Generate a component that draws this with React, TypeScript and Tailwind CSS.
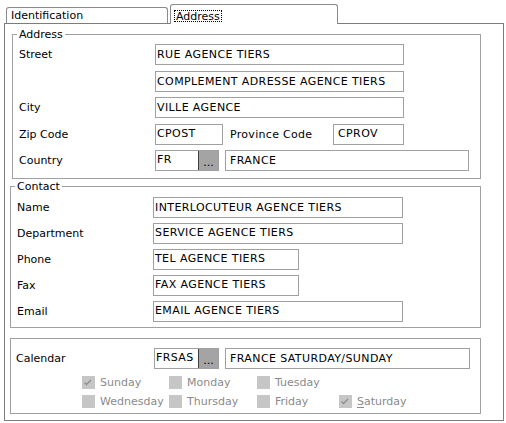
import React from "react";

function Input({ w, text, pad = 1, up = false }: { w: string; text: string; pad?: number; up?: boolean }) {
  return (
    <div
      className={`${w} h-[21px] border border-[#a0a0a0] bg-white flex items-center whitespace-nowrap overflow-hidden tracking-[0.4px] ${pad === 4 ? "pl-[4px]" : "pl-[1px]"} ${up ? "pb-[2px]" : ""}`}
    >
      {text}
    </div>
  );
}

function Combo({ w, text }: { w: string; text: string }) {
  return (
    <div className={`${w} h-[21px] border border-[#a0a0a0] bg-white flex`}>
      <div className="flex-1 pl-[1px] pb-[3px] flex items-center whitespace-nowrap overflow-hidden tracking-[0.4px]">{text}</div>
      <div className="w-[20px] h-full border-l border-[#404040] bg-[#a4a4a4] flex items-end justify-center pb-[2px] leading-[10px] text-black">
        ...
      </div>
    </div>
  );
}

function Row({ label, lw, children, className = "" }: { label: string; lw: string; children?: React.ReactNode; className?: string }) {
  return (
    <div className={`flex items-center h-[21px] ${className}`}>
      <div className={`${lw} shrink-0`}>{label}</div>
      {children}
    </div>
  );
}

function Check({ label, checked, mnemonic }: { label: string; checked?: boolean; mnemonic?: boolean }) {
  return (
    <div className="flex items-center h-[13px] gap-[5px] text-[#8a8a8a]">
      <div className="w-[13px] h-[13px] bg-[#c6c6c6] shrink-0 flex items-center justify-center">
        {checked && (
          <svg width="13" height="13" viewBox="0 0 13 13">
            <path d="M2.5 6.5 L4.5 8.5 L9 4" fill="none" stroke="#8e8e8e" strokeWidth="1.3" />
          </svg>
        )}
      </div>
      <span>
        {mnemonic ? (
          <>
            <span className="underline underline-offset-2">{label[0]}</span>
            {label.slice(1)}
          </>
        ) : (
          label
        )}
      </span>
    </div>
  );
}

export default function App() {
  return (
    <div className="w-[506px] h-[423px] bg-white text-black text-[11px] leading-[13px] [font-family:'DejaVu_Sans',Verdana,sans-serif] overflow-hidden">
      {/* Tabs */}
      <div className="h-[23px] flex items-end pl-[6px]">
        <div className="w-[162px] h-[16px] border-l border-t border-r border-[#8a8a8a] rounded-t-[3px] bg-white pl-[4px] pt-[1px]">
          Identification
        </div>
        <div className="ml-[2px] w-[168px] h-[20px] -mb-px relative z-10 border-l border-t border-r border-[#8a8a8a] rounded-t-[3px] bg-white pl-[3px] pt-[5px]">
          <span className="inline-block h-[12px] leading-[11px] px-[1px] border border-dotted border-black">Address</span>
        </div>
      </div>

      {/* Panel */}
      <div className="ml-[4px] w-[500px] h-[398px] border border-[#7c7c7c] flex flex-col">
        {/* Address group */}
        <div className="ml-[7px] mt-[10px] w-[469px] h-[145px] shrink-0 border border-[#a0a0a0] relative pt-[9px] pl-[6px]">
          <span className="absolute left-[4px] top-[-7px] bg-white px-[2px]">Address</span>
          <Row label="Street" lw="w-[136px]">
            <Input w="w-[249px]" text="RUE AGENCE TIERS" />
          </Row>
          <Row label="" lw="w-[136px]" className="mt-[6px]">
            <Input w="w-[249px]" text="COMPLEMENT ADRESSE AGENCE TIERS" />
          </Row>
          <Row label="City" lw="w-[136px]" className="mt-[5px]">
            <Input w="w-[249px]" text="VILLE AGENCE" />
          </Row>
          <Row label="Zip Code" lw="w-[136px]" className="mt-[6px]">
            <Input w="w-[68px]" text="CPOST" up />
            <div className="ml-[7px] w-[103px] tracking-[0.3px]">Province Code</div>
            <Input w="w-[71px]" text="CPROV" pad={4} up />
          </Row>
          <Row label="Country" lw="w-[136px]" className="mt-[5px]">
            <Combo w="w-[64px]" text="FR" />
            <div className="ml-[6px]">
              <Input w="w-[244px]" text="FRANCE" pad={4} />
            </div>
          </Row>
        </div>

        {/* Contact group */}
        <div className="ml-[5px] mt-[7px] w-[471px] h-[142px] shrink-0 border border-[#a0a0a0] relative pt-[10px] pl-[6px] flex flex-col gap-[5px]">
          <span className="absolute left-[4px] top-[-7px] bg-white px-[2px]">Contact</span>
          <Row label="Name" lw="w-[136px]">
            <Input w="w-[250px]" text="INTERLOCUTEUR AGENCE TIERS" />
          </Row>
          <Row label="Department" lw="w-[136px]">
            <Input w="w-[250px]" text="SERVICE AGENCE TIERS" up />
          </Row>
          <Row label="Phone" lw="w-[136px]">
            <Input w="w-[146px]" text="TEL AGENCE TIERS" up />
          </Row>
          <Row label="Fax" lw="w-[136px]">
            <Input w="w-[146px]" text="FAX AGENCE TIERS" up />
          </Row>
          <Row label="Email" lw="w-[136px]">
            <Input w="w-[250px]" text="EMAIL AGENCE TIERS" up />
          </Row>
        </div>

        {/* Calendar group */}
        <div className="ml-[5px] mt-[10px] w-[471px] h-[76px] shrink-0 border border-[#a0a0a0] pt-[9px]">
          <Row label="Calendar" lw="w-[138px] pl-[5px] box-content" className="">
            <Combo w="w-[65px]" text="FRSAS" />
            <div className="ml-[6px]">
              <Input w="w-[245px]" text="FRANCE SATURDAY/SUNDAY" pad={4} />
            </div>
          </Row>
          <div className="mt-[7px] pl-[71px] grid grid-cols-[87px_88px_82px_auto] gap-y-[6px]">
            <Check label="Sunday" checked />
            <Check label="Monday" />
            <Check label="Tuesday" />
            <div />
            <Check label="Wednesday" />
            <Check label="Thursday" />
            <Check label="Friday" />
            <Check label="Saturday" checked mnemonic />
          </div>
        </div>
      </div>
    </div>
  );
}
